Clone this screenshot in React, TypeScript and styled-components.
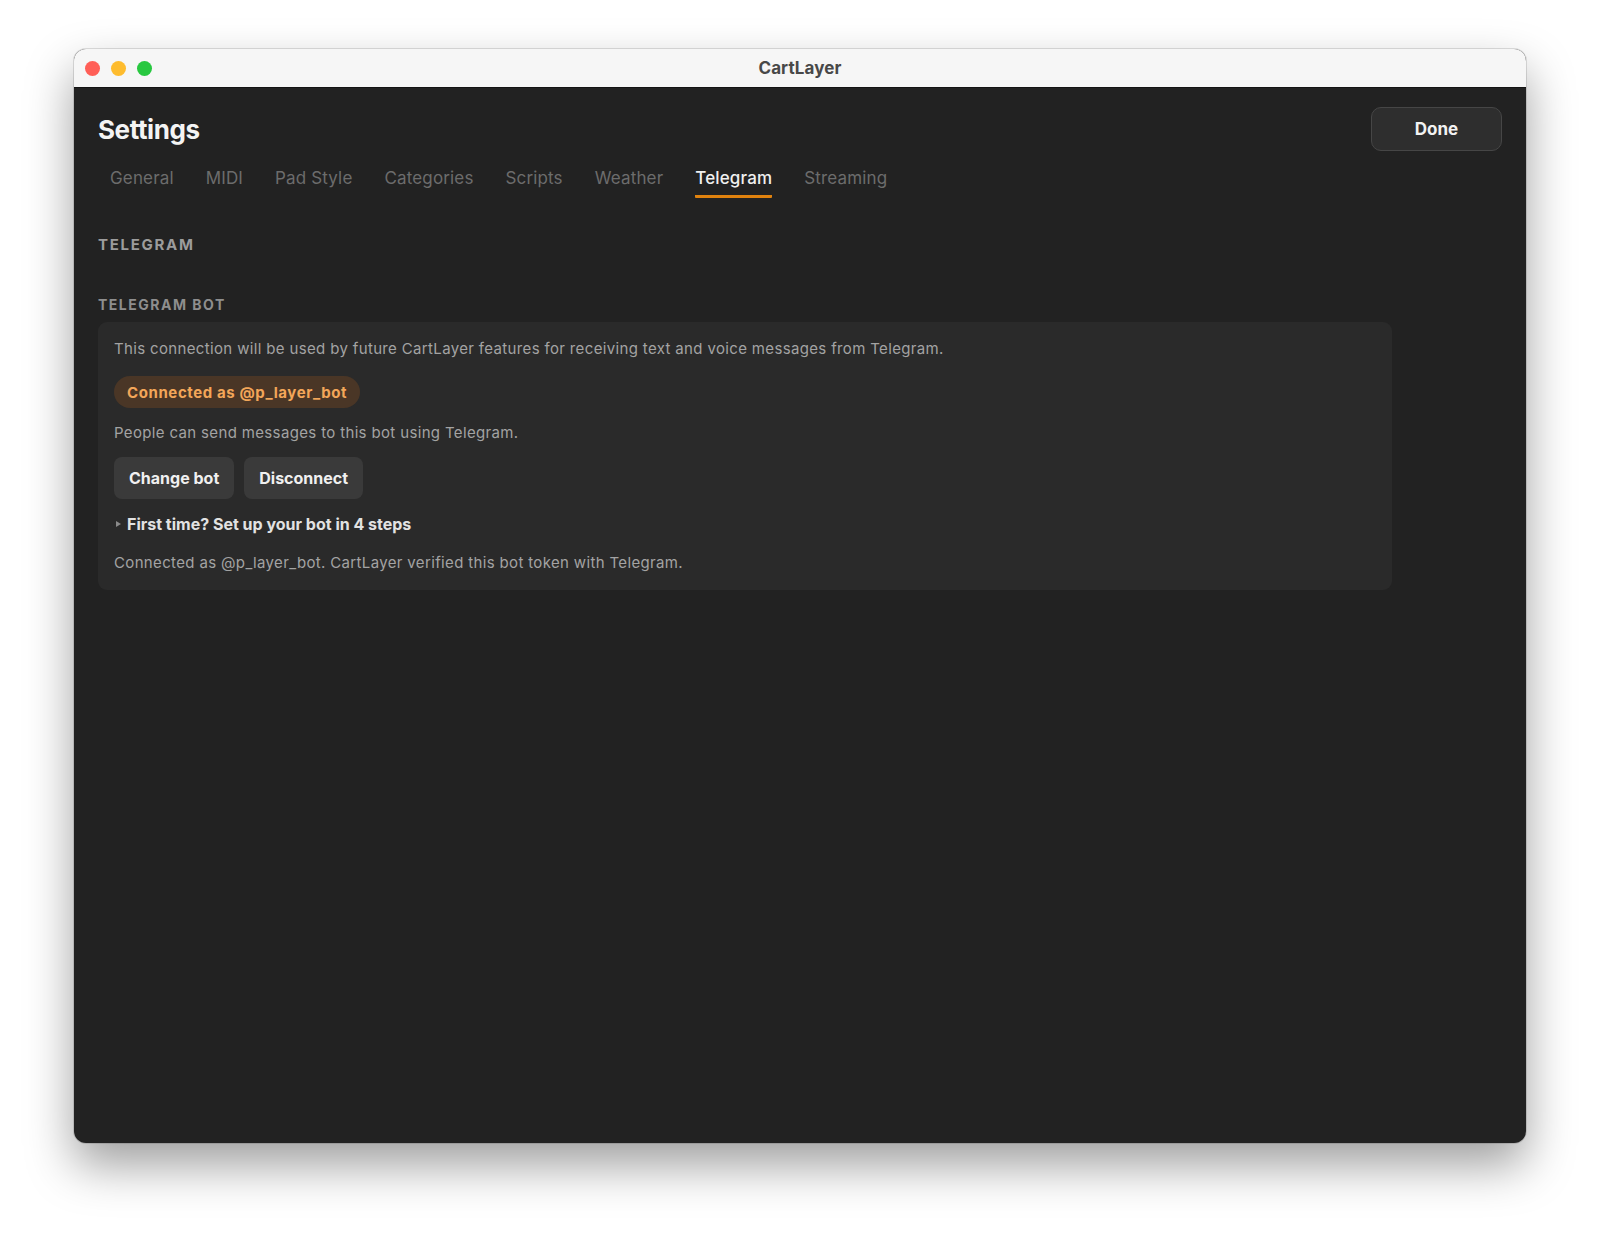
import React from 'react'
import styled, { createGlobalStyle } from 'styled-components'

const tabs = [
  'General',
  'MIDI',
  'Pad Style',
  'Categories',
  'Scripts',
  'Weather',
  'Telegram',
  'Streaming',
]

export default function App(): React.ReactElement {
  return (
    <>
      <GlobalStyle />
      <Page>
        <Window>
          <TitleBar>
            <Lights>
              <Light color="#ff5f57" />
              <Light color="#febc2e" />
              <Light color="#28c840" />
            </Lights>
            <WindowTitle>CartLayer</WindowTitle>
          </TitleBar>
          <Body>
            <Header>
              <Title>Settings</Title>
              <DoneButton>Done</DoneButton>
            </Header>
            <TabBar>
              {tabs.map((t) => (
                <Tab key={t} $active={t === 'Telegram'}>
                  {t}
                </Tab>
              ))}
            </TabBar>
            <SectionTitle>TELEGRAM</SectionTitle>
            <GroupLabel>TELEGRAM BOT</GroupLabel>
            <Card>
              <Text>
                This connection will be used by future CartLayer features for
                receiving text and voice messages from Telegram.
              </Text>
              <Badge>Connected as @p_layer_bot</Badge>
              <Text>People can send messages to this bot using Telegram.</Text>
              <ButtonRow>
                <Button>Change bot</Button>
                <Button>Disconnect</Button>
              </ButtonRow>
              <Disclosure>
                <Triangle />
                First time? Set up your bot in 4 steps
              </Disclosure>
              <Text>
                Connected as @p_layer_bot. CartLayer verified this bot token
                with Telegram.
              </Text>
            </Card>
          </Body>
        </Window>
      </Page>
    </>
  )
}

const GlobalStyle = createGlobalStyle`
  body {
    margin: 0;
    background: #ffffff;
    font-family: Inter, 'Noto Sans', 'Liberation Sans', sans-serif;
  }
`

const Page = styled.div`
  width: 1600px;
  height: 1241px;
  padding: 49px 0 0 74px;
  box-sizing: border-box;
  background: #ffffff;
  overflow: hidden;
`

const Window = styled.div`
  width: 1452px;
  height: 1094px;
  border-radius: 12px;
  overflow: hidden;
  display: flex;
  flex-direction: column;
  background: #222222;
  box-shadow: 0 22px 48px rgba(0, 0, 0, 0.38), 0 0 0 1px rgba(0, 0, 0, 0.12);
`

const TitleBar = styled.div`
  height: 38px;
  flex-shrink: 0;
  display: flex;
  align-items: center;
  justify-content: center;
  position: relative;
  background: #f6f6f6;
  border-bottom: 1px solid #141414;
`

const Lights = styled.div`
  position: absolute;
  left: 11px;
  top: 12px;
  display: flex;
  gap: 11px;
`

const Light = styled.span<{ color: string }>`
  width: 15px;
  height: 15px;
  border-radius: 50%;
  background: ${(p) => p.color};
`

const WindowTitle = styled.div`
  font-size: 17px;
  font-weight: 700;
  color: #484848;
  letter-spacing: 0.1px;
`

const Body = styled.div`
  flex: 1;
  padding: 19px 24px 0 24px;
  display: flex;
  flex-direction: column;
`

const Header = styled.div`
  display: flex;
  align-items: center;
  justify-content: space-between;
`

const Title = styled.h1`
  margin: 0;
  font-size: 26px;
  font-weight: 700;
  color: #f4f4f4;
  letter-spacing: -0.4px;
`

const DoneButton = styled.button`
  width: 131px;
  height: 44px;
  border-radius: 10px;
  border: 1px solid #464646;
  background: #2e2e2e;
  color: #f2f2f2;
  font-family: inherit;
  font-size: 17px;
  font-weight: 700;
`

const TabBar = styled.div`
  display: flex;
  gap: 32px;
  padding-left: 12px;
  margin-top: 15px;
`

const Tab = styled.div<{ $active?: boolean }>`
  font-size: 17px;
  line-height: 24px;
  letter-spacing: 0.15px;
  padding-bottom: 5px;
  color: ${(p) => (p.$active ? '#f0f0f0' : '#6c6c6c')};
  font-weight: ${(p) => (p.$active ? 500 : 400)};
  border-bottom: 3px solid ${(p) => (p.$active ? '#e0820e' : 'transparent')};
  border-radius: 1px;
`

const SectionTitle = styled.div`
  margin-top: 37px;
  font-size: 15px;
  font-weight: 700;
  letter-spacing: 1.7px;
  color: #9c9c9c;
`

const GroupLabel = styled.div`
  margin-top: 42px;
  font-size: 14px;
  font-weight: 700;
  letter-spacing: 1.5px;
  color: #8e8e8e;
`

const Card = styled.div`
  margin-top: 9px;
  width: 1294px;
  box-sizing: border-box;
  padding: 17px 16px 17px 16px;
  border-radius: 9px;
  background: #2a2a2a;
  display: flex;
  flex-direction: column;
  align-items: flex-start;
`

const Text = styled.div`
  font-size: 15px;
  line-height: 20px;
  letter-spacing: 0.35px;
  color: #a3a3a3;
`

const Badge = styled.div`
  margin: 17px 0 15px 0;
  height: 32px;
  padding: 0 13px;
  display: flex;
  align-items: center;
  border-radius: 16px;
  background: #4a3626;
  color: #f3a659;
  font-size: 15px;
  font-weight: 700;
  letter-spacing: 0.6px;
`

const ButtonRow = styled.div`
  display: flex;
  gap: 10px;
  margin: 14px 0 15px 0;
`

const Button = styled.button`
  height: 42px;
  padding: 0 15px;
  border: none;
  border-radius: 8px;
  background: #3a3a3a;
  color: #f0f0f0;
  font-family: inherit;
  font-size: 16px;
  font-weight: 700;
`

const Disclosure = styled.div`
  display: flex;
  align-items: center;
  gap: 6px;
  font-size: 16px;
  line-height: 20px;
  font-weight: 700;
  color: #e2e2e2;
  margin-bottom: 19px;
`

const Triangle = styled.span`
  width: 0;
  height: 0;
  border-left: 5px solid #8a8a8a;
  border-top: 3px solid transparent;
  border-bottom: 3px solid transparent;
  margin-left: 2px;
`
